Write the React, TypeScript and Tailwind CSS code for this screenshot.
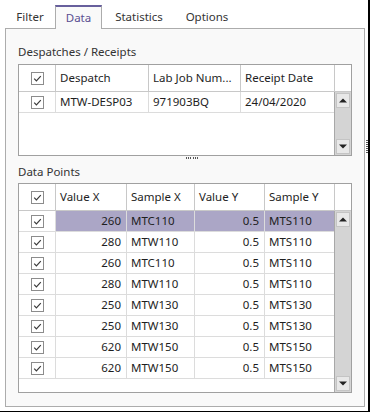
import React from "react";

const despatches = [{ despatch: "MTW-DESP03", lab: "971903BQ", date: "24/04/2020" }];

const points = [
    { vx: "260", sx: "MTC110", vy: "0.5", sy: "MTS110" },
    { vx: "280", sx: "MTW110", vy: "0.5", sy: "MTS110" },
    { vx: "260", sx: "MTC110", vy: "0.5", sy: "MTS110" },
    { vx: "280", sx: "MTW110", vy: "0.5", sy: "MTS110" },
    { vx: "250", sx: "MTW130", vy: "0.5", sy: "MTS130" },
    { vx: "250", sx: "MTW130", vy: "0.5", sy: "MTS130" },
    { vx: "620", sx: "MTW150", vy: "0.5", sy: "MTS150" },
    { vx: "620", sx: "MTW150", vy: "0.5", sy: "MTS150" },
];

function Check() {
    return (
        <div className="w-[13px] h-[13px] border border-[#8c8c8c] bg-white flex items-center justify-center">
            <svg width="11" height="11" viewBox="0 0 11 11">
                <polyline points="2.2,5.6 4.4,7.8 8.8,3.2" fill="none" stroke="#3a3a3a" strokeWidth="1.2" />
            </svg>
        </div>
    );
}

function ScrollBar() {
    return (
        <div className="w-[17px] border-l border-[#a8a8a8] bg-[#d4d4d4] flex flex-col justify-between p-[1px]">
            <div className="h-[15px] bg-[#e8e8e8] border border-[#c4c4c4] flex items-center justify-center">
                <svg width="8" height="5" viewBox="0 0 8 5">
                    <polygon points="0,4.5 4,0.5 8,4.5" fill="#222" />
                </svg>
            </div>
            <div className="h-[15px] bg-[#e8e8e8] border border-[#c4c4c4] flex items-center justify-center">
                <svg width="8" height="5" viewBox="0 0 8 5">
                    <polygon points="0,0.5 4,4.5 8,0.5" fill="#222" />
                </svg>
            </div>
        </div>
    );
}

export default function App() {
    return (
        <div className="w-[370px] h-[412px] bg-white border-r-2 border-b border-black relative text-[11.5px] text-[#1e1e1e] font-['Noto_Sans',sans-serif]">
            {/* Tabs */}
            <div className="h-[28px] pl-[5px] flex items-end">
                <div className="w-[50px] h-[22px] flex items-center justify-center text-[#333]">Filter</div>
                <div className="relative z-10 w-[47px] h-[24px] -mb-[1px] bg-[#f9f9f9] border-l border-r border-[#acacac] border-t-2 border-t-[#675f9c] flex items-center justify-center text-[#5a4f92]">
                    Data
                </div>
                <div className="w-[74px] h-[22px] flex items-center justify-center text-[#333]">Statistics</div>
                <div className="w-[62px] h-[22px] flex items-center justify-center text-[#333]">Options</div>
            </div>

            {/* Panel */}
            <div className="ml-[5px] w-[360px] h-[379px] border border-[#acacac] bg-[#f9f9f9] px-[12px] flex flex-col">
                <div className="mt-[15px] leading-[16px] text-[#333]">Despatches / Receipts</div>

                {/* Despatch grid */}
                <div className="mt-[4px] w-[334px] h-[92px] border border-[#a0a0a0] bg-white flex flex-col">
                    <div className="h-[27px] flex border-b border-[#c8c8c8]">
                        <div className="w-[37px] border-r border-[#c8c8c8] flex items-center justify-center">
                            <Check />
                        </div>
                        <div className="w-[93px] border-r border-[#c8c8c8] flex items-center pl-[4px]">Despatch</div>
                        <div className="w-[92px] border-r border-[#c8c8c8] flex items-center pl-[4px]">Lab Job Num...</div>
                        <div className="w-[94px] border-r border-[#c8c8c8] flex items-center pl-[4px]">Receipt Date</div>
                        <div className="flex-1" />
                    </div>
                    <div className="flex-1 flex">
                        <div className="w-[315px]">
                            {despatches.map((d, i) => (
                                <div key={i} className="h-[21px] flex border-b border-[#dcdcdc]">
                                    <div className="w-[37px] border-r border-[#dcdcdc] flex items-center justify-center">
                                        <Check />
                                    </div>
                                    <div className="w-[93px] border-r border-[#dcdcdc] flex items-center pl-[4px]">{d.despatch}</div>
                                    <div className="w-[92px] border-r border-[#dcdcdc] flex items-center pl-[4px]">{d.lab}</div>
                                    <div className="flex-1 flex items-center pl-[4px]">{d.date}</div>
                                </div>
                            ))}
                        </div>
                        <ScrollBar />
                    </div>
                </div>

                {/* Splitter grip */}
                <div className="h-[4px] pt-[1px] flex justify-center gap-[1.4px] pl-[14px]">
                    {[0, 1, 2, 3, 4, 5].map((i) => (
                        <div key={i} className="w-[1px] h-[2px] bg-[#555]" />
                    ))}
                </div>

                <div className="mt-[4px] leading-[16px] text-[#333]">Data Points</div>

                {/* Data points grid */}
                <div className="mt-[3px] w-[334px] h-[210px] border border-[#a0a0a0] bg-white flex flex-col">
                    <div className="h-[27px] flex border-b border-[#c8c8c8]">
                        <div className="w-[37px] border-r border-[#c8c8c8] flex items-center justify-center">
                            <Check />
                        </div>
                        <div className="w-[71px] border-r border-[#c8c8c8] flex items-center pl-[4px]">Value X</div>
                        <div className="w-[68px] border-r border-[#c8c8c8] flex items-center pl-[4px]">Sample X</div>
                        <div className="w-[70px] border-r border-[#c8c8c8] flex items-center pl-[4px]">Value Y</div>
                        <div className="w-[70px] border-r border-[#c8c8c8] flex items-center pl-[4px]">Sample Y</div>
                        <div className="flex-1" />
                    </div>
                    <div className="flex-1 flex">
                        <div className="w-[315px]">
                            {points.map((p, i) => {
                                const sel = i === 0 ? "bg-[#aba6c6]" : "";
                                return (
                                    <div key={i} className="h-[21px] flex border-b border-[#dcdcdc]">
                                        <div className="w-[37px] border-r border-[#dcdcdc] flex items-center justify-center">
                                            <Check />
                                        </div>
                                        <div className={`w-[71px] border-r border-[#dcdcdc] flex items-center justify-end pr-[5px] ${sel}`}>{p.vx}</div>
                                        <div className={`w-[68px] border-r border-[#dcdcdc] flex items-center pl-[4px] ${sel}`}>{p.sx}</div>
                                        <div className={`w-[70px] border-r border-[#dcdcdc] flex items-center justify-end pr-[5px] ${sel}`}>{p.vy}</div>
                                        <div className={`flex-1 flex items-center pl-[4px] ${sel}`}>{p.sy}</div>
                                    </div>
                                );
                            })}
                        </div>
                        <ScrollBar />
                    </div>
                </div>
            </div>

            {/* Right splitter grip */}
            <div className="absolute left-[366px] top-[140px] flex flex-col gap-[1px]">
                {[0, 1, 2, 3, 4, 5, 6].map((i) => (
                    <div key={i} className="w-[2px] h-[1px] bg-[#555]" />
                ))}
            </div>
        </div>
    );
}
